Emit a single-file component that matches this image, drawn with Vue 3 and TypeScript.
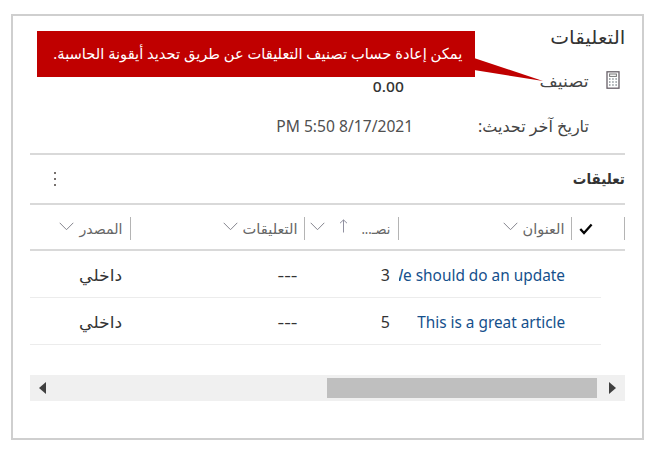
<script setup lang="ts">
import type { Directive } from 'vue'

interface Row {
  title: string
  rating: number
  comment: string
  source: string
  width: number
}

const rows: Row[] = [
  { title: 'We should do an update', rating: 3, comment: '---', source: 'داخلي', width: 176 },
  { title: 'This is a great article', rating: 5, comment: '---', source: 'داخلي', width: 148 },
]

// Condenses or widens a label horizontally so that it takes the given width.
const vFit: Directive<HTMLElement, number> = {
  mounted(el, { value }) {
    const natural = el.getBoundingClientRect().width
    el.style.transform = `scaleX(${value / natural})`
    el.style.marginLeft = `${value - natural}px`
  },
}
</script>

<template>
  <main class="page" dir="rtl">
    <section class="card">
      <h1 class="title"><span v-fit="75" class="fit">التعليقات</span></h1>

      <div class="field rating">
        <svg class="calc" width="14" height="18" viewBox="0 0 14 18">
          <rect x="1" y="0.8" width="12" height="16.4" fill="#fff" stroke="#686068" stroke-width="1.3" />
          <rect x="3.6" y="3" width="6.8" height="2.4" fill="#fff" stroke="#777" stroke-width="1" />
          <path d="M3 8h8M3 11h8M3 14h8" stroke="#8b9297" stroke-width="1.3" stroke-dasharray="1.5 1.7" />
        </svg>
        <span class="label"><span v-fit="49" class="fit">تصنيف</span></span>
        <strong class="score"><span v-fit="31" class="fit">0.00</span></strong>
      </div>

      <div class="field updated">
        <span class="label"><span v-fit="111" class="fit">تاريخ آخر تحديث:</span></span>
        <span class="date" dir="ltr"><span v-fit="137" class="fit">PM 5:50 8/17/2021</span></span>
      </div>

      <header class="bar">
        <h2><span v-fit="52" class="fit">تعليقات</span></h2>
        <svg class="more" width="4" height="16" viewBox="0 0 4 16">
          <path d="M1 1h2v2H1zM1 7h2v2H1zM1 13h2v2H1z" fill="#77716e" />
        </svg>
      </header>

      <div class="grid head">
        <div class="cell select">
          <svg width="14" height="12" viewBox="0 0 14 12">
            <path d="M1.3 6 5 10 12.6 1.5" fill="none" stroke="#050505" stroke-width="2.3" />
          </svg>
        </div>
        <div class="cell">
          <span v-fit="42" class="fit">العنوان</span>
          <svg class="chev" width="15" height="9" viewBox="0 0 15 9"><path d="M.7.8 7.5 7.7 14.3.8" /></svg>
        </div>
        <div class="cell sorted">
          <span v-fit="29" class="fit">نصـ...</span>
          <svg class="arrow" width="9" height="14" viewBox="0 0 9 14"><path d="M4.5 13.5V1M1 4.2 4.5.9 8 4.2" /></svg>
          <svg class="chev" width="15" height="9" viewBox="0 0 15 9"><path d="M.7.8 7.5 7.7 14.3.8" /></svg>
        </div>
        <div class="cell">
          <span v-fit="55" class="fit">التعليقات</span>
          <svg class="chev" width="15" height="9" viewBox="0 0 15 9"><path d="M.7.8 7.5 7.7 14.3.8" /></svg>
        </div>
        <div class="cell origin">
          <span v-fit="43" class="fit">المصدر</span>
          <svg class="chev" width="15" height="9" viewBox="0 0 15 9"><path d="M.7.8 7.5 7.7 14.3.8" /></svg>
        </div>
      </div>

      <div v-for="row in rows" :key="row.title" class="grid row">
        <div class="cell link" dir="ltr"><span v-fit="row.width" class="fit">{{ row.title }}</span></div>
        <div class="cell number">{{ row.rating }}</div>
        <div class="cell dashes"><span v-fit="20" class="fit">{{ row.comment }}</span></div>
        <div class="cell source"><span v-fit="43" class="fit">{{ row.source }}</span></div>
      </div>

      <div class="scroll" dir="ltr">
        <svg width="7" height="12" viewBox="0 0 7 12"><path d="M7 0v12L0 6z" fill="#404040" /></svg>
        <div class="thumb"></div>
        <svg width="7" height="12" viewBox="0 0 7 12"><path d="M0 0v12l7-6z" fill="#404040" /></svg>
      </div>
    </section>

    <aside class="callout">
      <svg class="pointer" width="70" height="26" viewBox="0 0 70 26"><path d="M0 1 69 24 0 13z" fill="#c00000" /></svg>
      <span v-fit="409" class="fit">يمكن إعادة حساب تصنيف التعليقات عن طريق تحديد أيقونة الحاسبة.</span>
    </aside>
  </main>
</template>

<style>
body {
  margin: 0;
  background: #fff;
}
</style>

<style scoped>
.page {
  position: relative;
  box-sizing: border-box;
  width: 652px;
  height: 453px;
  padding: 14px 8px 13px 11px;
  overflow: hidden;
  color: #333;
  font: 16px/22px "Noto Sans", "DejaVu Sans", sans-serif;
}
.card {
  box-sizing: border-box;
  height: 426px;
  padding: 9px 17px 0 17px;
  border: 2px solid #cfcfcf;
}
.fit {
  display: inline-block;
  flex: none;
  white-space: nowrap;
  transform-origin: right center;
}
.title {
  height: 29px;
  margin: 0;
  font-size: 19px;
  font-weight: 400;
  line-height: 24px;
}
.field {
  display: flex;
}
.rating {
  height: 43px;
  padding-top: 17px;
  box-sizing: border-box;
  padding-right: 5px;
}
.calc {
  margin-left: 17px;
}
.label {
  width: 176px;
  font-size: 16px;
  color: #444;
}
.rating .label {
  margin-top: -1px;
}
.score {
  padding-top: 4px;
  margin-right: 9px;
  font-weight: 500;
  font-size: 15px;
}
.updated {
  height: 56px;
  padding: 18px 36px 0 0;
  box-sizing: border-box;
}
.date {
  color: #505050;
}
.bar {
  display: flex;
  align-items: center;
  justify-content: space-between;
  height: 48px;
  padding-left: 23px;
  border-top: 2px solid #d9d9d9;
}
h2 {
  margin: 0;
  padding-bottom: 2px;
  font-size: 15px;
  font-weight: 600;
}
.grid {
  display: grid;
  grid-template-columns: 53px 173px 94px 174px 101px;
}
.head {
  height: 44px;
  align-items: center;
  border-top: 2px solid #d9d9d9;
  border-bottom: 2px solid #d9d9d9;
  color: #666;
  font-size: 14px;
}
.head .cell {
  display: flex;
  align-items: center;
  height: 23px;
  margin-top: 3px;
  padding-right: 6px;
  border-right: 1px solid #b4b4b4;
}
.head .select {
  padding-right: 31px;
}
.chev,
.arrow {
  fill: none;
  stroke: #85858e;
}
.chev {
  margin: 0 5px 4px 0;
}
.arrow {
  margin: 0 13px 6px 0;
  stroke: #9090a0;
}
.head .sorted {
  padding-right: 8px;
}
.head .origin {
  padding-right: 8px;
}
.sorted .chev {
  margin-right: 14px;
}
.row {
  grid-template-columns: 173px 94px 174px 101px;
  height: 46px;
  margin-right: 24px;
  padding-right: 29px;
  align-items: center;
  border-bottom: 1px solid #ececec;
}
.row .cell {
  padding-top: 2px;
  padding-right: 7px;
}
.row .link {
  display: flex;
  justify-content: flex-end;
  overflow: hidden;
  color: #15508c;
}
.row .number,
.row .source {
  padding-right: 9px;
}
.row .dashes {
  padding-right: 8px;
}
.scroll {
  display: flex;
  align-items: center;
  justify-content: space-between;
  height: 26px;
  margin-top: 30px;
  padding: 0 9px;
  background: #f0f0f0;
}
.thumb {
  width: 270px;
  height: 20px;
  margin: 0 12px 0 auto;
  background: #bfbfbf;
}
.callout {
  position: absolute;
  box-sizing: border-box;
  left: 37px;
  top: 31px;
  width: 438px;
  height: 46px;
  padding: 11px 13px;
  background: #c00000;
  color: #fff;
  font-size: 15px;
}
.pointer {
  position: absolute;
  left: 437px;
  top: 26px;
}
</style>
